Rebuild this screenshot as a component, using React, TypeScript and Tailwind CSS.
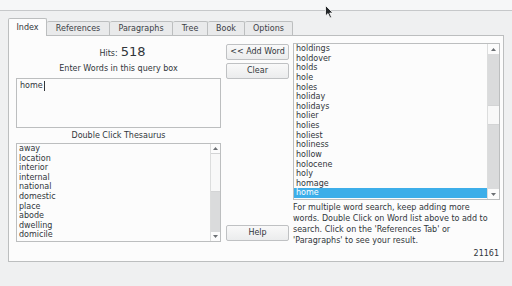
import React from "react";

const rightWords = [
  "holdings",
  "holdover",
  "holds",
  "hole",
  "holes",
  "holiday",
  "holidays",
  "holier",
  "holies",
  "holiest",
  "holiness",
  "hollow",
  "holocene",
  "holy",
  "homage",
  "home",
];

const thesaurus = [
  "away",
  "location",
  "interior",
  "internal",
  "national",
  "domestic",
  "place",
  "abode",
  "dwelling",
  "domicile",
];

const tabs = [
  { label: "Index", w: "w-[39px]" },
  { label: "References", w: "w-[63px]" },
  { label: "Paragraphs", w: "w-[63px]" },
  { label: "Tree", w: "w-[35px]" },
  { label: "Book", w: "w-[37px]" },
  { label: "Options", w: "w-[48px]" },
];

const Arrow = ({ up }: { up?: boolean }) => (
  <svg width="5" height="3" viewBox="0 0 5 3" className="fill-[#6c7074]">
    {up ? <path d="M0 3 L2.5 0 L5 3 Z" /> : <path d="M0 0 L2.5 3 L5 0 Z" />}
  </svg>
);

const Btn = ({ children, className }: { children: React.ReactNode; className?: string }) => (
  <div
    className={`h-[16px] w-[63px] rounded-[2px] border border-[#bfc1c3] bg-gradient-to-b from-[#f9f9f9] to-[#ebeced] flex items-center justify-center text-[#31363b] ${className ?? ""}`}
  >
    {children}
  </div>
);

export default function App() {
  return (
    <div className="relative w-[512px] h-[286px] overflow-hidden bg-[#eff0f1] font-['DejaVu_Sans',sans-serif] text-[8px] text-[#31363b]">
      {/* top strip */}
      <div className="h-[11px] bg-[#f6f7f8] border-b border-[#c6c8ca]" />

      <div className="px-2 pt-[7px]">
        {/* tab bar */}
        <div className="flex items-end h-[17px]">
          {tabs.map((t, i) =>
            i === 0 ? (
              <div
                key={t.label}
                className={`${t.w} h-[18px] -mb-px relative z-10 bg-[#fcfcfc] border border-b-0 border-[#bcbebf] rounded-t-[2px] flex items-center justify-center`}
              >
                {t.label}
              </div>
            ) : (
              <div
                key={t.label}
                className={`${t.w} h-[14px] bg-[#e9eaeb] border border-l-0 border-b-0 border-[#bcbebf] rounded-t-[2px] flex items-center justify-center text-[#3b4045]`}
              >
                {t.label}
              </div>
            ),
          )}
        </div>

        {/* panel */}
        <div className="h-[227px] border border-[#bcbebf] bg-[#fcfcfc] flex pl-[7px] pt-[7px]">
          {/* left column */}
          <div className="w-[205px] flex flex-col">
            <div className="h-[18px] flex items-baseline justify-center pl-2 pt-[1px] gap-[3px]">
              <span>Hits:</span>
              <span className="text-[13px] leading-[16px]">518</span>
            </div>
            <div className="h-[15px] leading-[15px] text-center">Enter Words in this query box</div>
            <div className="mt-[2px] h-[50px] border border-[#bcbebf] bg-[#fcfcfc] px-[3px] pt-[2px] leading-[10px] flex items-start">
              <span>home</span>
              <span className="w-px h-[10px] bg-[#31363b] ml-px" />
            </div>
            <div className="h-[15px] leading-[16px] text-center">Double Click Thesaurus</div>
            <div className="h-[99px] border border-[#bcbebf] bg-[#fcfcfc] flex">
              <div className="flex-1 pl-[2px] leading-[9.6px]">
                {thesaurus.map((w) => (
                  <div key={w} className="h-[9.6px]">
                    {w}
                  </div>
                ))}
              </div>
              <div className="w-[10px] border-l border-[#dcdddd] flex flex-col">
                <div className="h-[9px] flex items-center justify-center">
                  <Arrow up />
                </div>
                <div className="h-[39px] bg-[#f8f8f8] border-y border-[#d3d4d5]" />
                <div className="flex-1 bg-[#dadbdc]" />
                <div className="h-[9px] flex items-center justify-center">
                  <Arrow />
                </div>
              </div>
            </div>
          </div>

          {/* middle column */}
          <div className="ml-[5px] w-[63px] h-[199px] flex flex-col">
            <Btn className="mt-[1px]">&lt;&lt; Add Word</Btn>
            <Btn className="mt-[3px]">Clear</Btn>
            <Btn className="mt-auto mb-[1px]">Help</Btn>
          </div>

          {/* right column */}
          <div className="ml-[4px] w-[207px] flex flex-col">
            <div className="h-[157px] border border-[#bcbebf] bg-[#fcfcfc] flex">
              <div className="flex-1 leading-[9.625px]">
                {rightWords.map((w) =>
                  w === "home" ? (
                    <div key={w} className="h-[9.625px] bg-[#3daee9] text-white pl-[2px]">
                      {w}
                    </div>
                  ) : (
                    <div key={w} className="h-[9.625px] pl-[2px]">
                      {w}
                    </div>
                  ),
                )}
              </div>
              <div className="w-[12px] border-l border-[#dcdddd] flex flex-col">
                <div className="h-[10px] flex items-center justify-center">
                  <Arrow up />
                </div>
                <div className="h-[51px] bg-[#dadbdc]" />
                <div className="h-[20px] bg-[#f8f8f8] border-y border-[#d3d4d5]" />
                <div className="flex-1 bg-[#dadbdc]" />
                <div className="h-[10px] flex items-center justify-center">
                  <Arrow />
                </div>
              </div>
            </div>
            <div className="mt-[2px] leading-[11px]">
              For multiple word search, keep adding more
              <br />
              words. Double Click on Word list above to add to
              <br />
              search. Click on the 'References Tab' or
              <br />
              'Paragraphs' to see your result.
            </div>
            <div className="mt-[2px] leading-[11px] text-right pr-[1px]">21161</div>
          </div>
        </div>
      </div>

      {/* mouse pointer */}
      <svg
        className="absolute left-[325px] top-[5px]"
        width="9"
        height="14"
        viewBox="0 0 9 14"
      >
        <path d="M0.5 0.5 L0.5 11 L3 8.6 L5 13 L6.6 12.3 L4.7 8 L8 8 Z" fill="#232629" stroke="#fcfcfc" strokeWidth="0.8" />
      </svg>
    </div>
  );
}
